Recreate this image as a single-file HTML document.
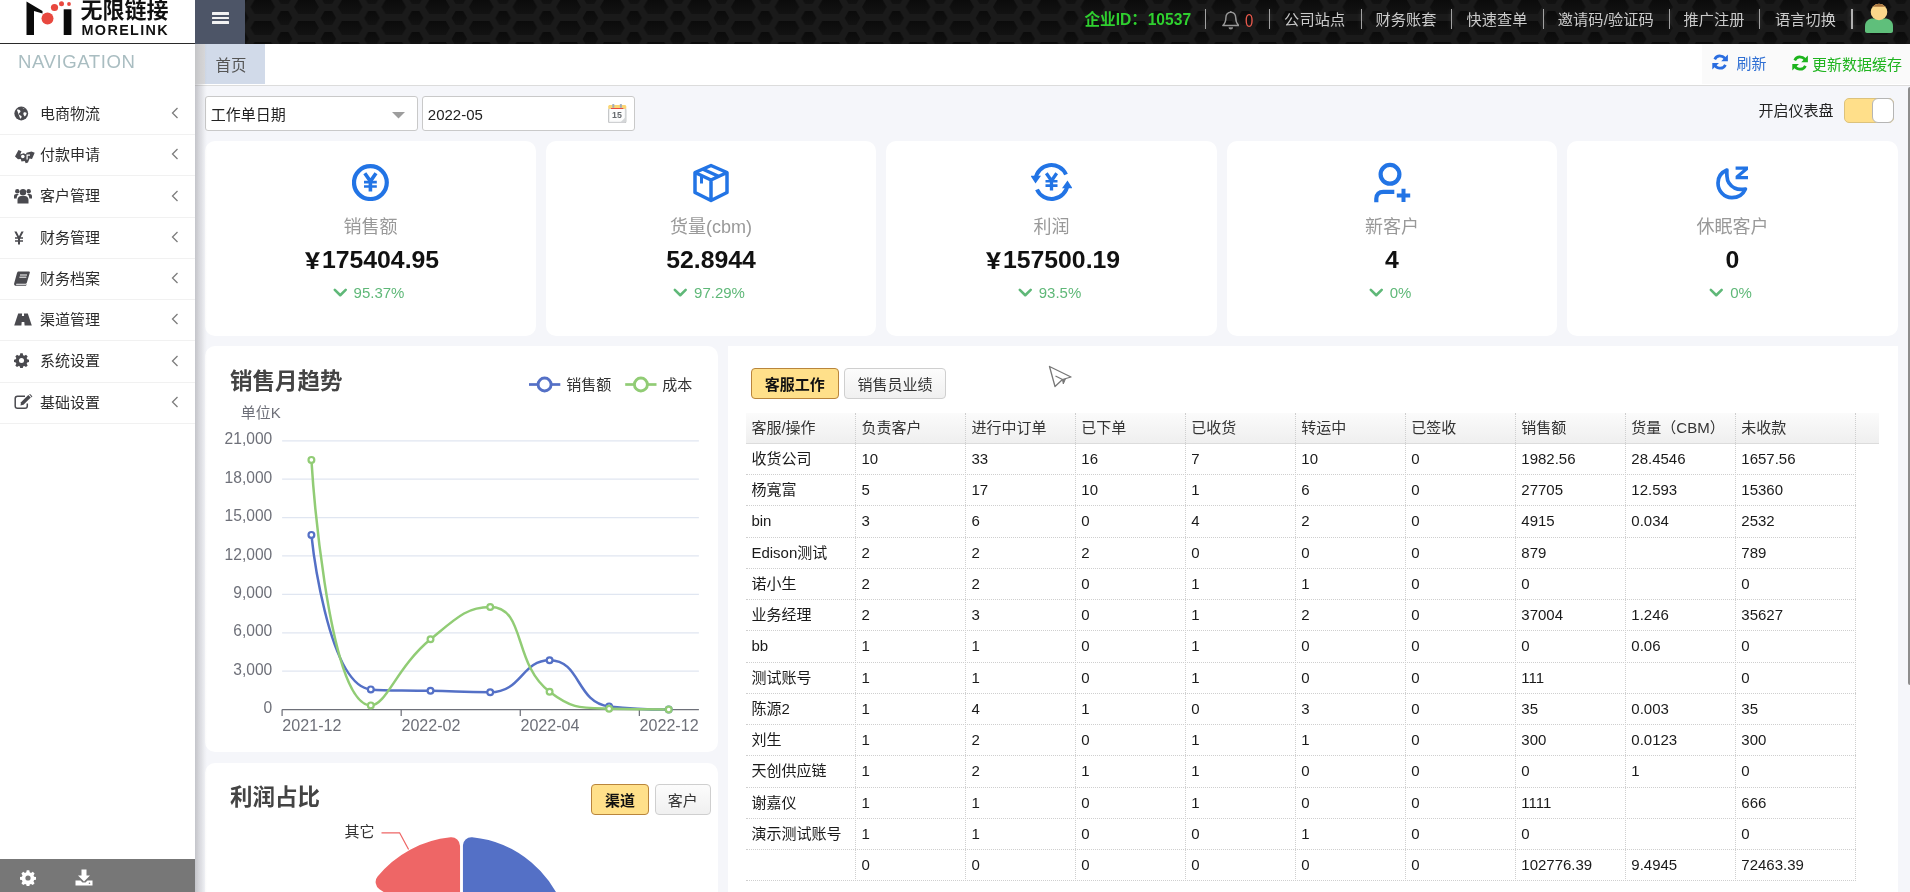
<!DOCTYPE html>
<html lang="zh-CN"><head><meta charset="utf-8"><title>MoreLink</title>
<style>
*{box-sizing:border-box;margin:0;padding:0}
html,body{width:1910px;height:892px;overflow:hidden;background:#f5f6fa;}
body{position:relative;font-family:"Liberation Sans","Noto Sans CJK SC",sans-serif;font-size:15px;color:#333;}
.abs{position:absolute}
#root{position:absolute;left:0;top:0;width:1910px;height:892px;will-change:transform}
#hdr{position:absolute;left:0;top:0;width:1910px;height:43.75px;background:#161616;overflow:hidden}
#hdr svg.hex{position:absolute;left:195px;top:0}
#logo{position:absolute;left:0;top:0;width:195px;height:43.75px;background:#fff;border-bottom:1.25px solid #2a2a2a}
#burger{position:absolute;left:195px;top:0;width:50px;height:43.75px;background:#4d5567}
#burger i{position:absolute;left:17px;width:17px;height:2.7px;background:#f2f2f2;border-radius:.5px}
.tm{position:absolute;top:0;height:43.75px;line-height:40.4px;color:#cacaca;font-size:15.2px;letter-spacing:.1px;white-space:nowrap}
.sep{position:absolute;top:9px;width:1.25px;height:20px;background:#a2a2a2;box-shadow:0 0 5px rgba(255,255,255,.22)}
#side{position:absolute;left:0;top:43.75px;width:195px;height:848.25px;background:#fff}
#side .nav{position:absolute;left:18px;top:8px;font-size:18.6px;color:#a9bdc1;letter-spacing:.55px;line-height:20px}
.mi{position:absolute;left:0;width:195px;height:41.25px;border-bottom:1.25px solid #f1f1f1;}
.mi span{position:absolute;left:40px;top:0;line-height:40px;font-size:15px;color:#2c2c2c}
.mi svg.ic{position:absolute;left:13px;top:12px;margin-top:-1px}
.mi svg.ch{position:absolute;left:171px;top:13.3px}
#sbot{position:absolute;left:0;top:858.75px;width:195px;height:34px;background:#777}
#shadow{position:absolute;left:195px;top:43.75px;width:12px;height:849px;background:linear-gradient(90deg,rgba(110,110,118,.36),rgba(110,110,118,.19) 45%,rgba(110,110,118,.05) 80%,rgba(110,110,118,0));z-index:5}
#tabs{position:absolute;left:195px;top:43.75px;width:1715px;height:42px;background:#fff;border-bottom:1.25px solid #dcdcdc}
#tab1{position:absolute;left:10px;top:0;width:60px;height:40px;background:#d1dae9;color:#555;font-size:15.4px;padding-left:10.5px;line-height:43.4px}
#tabr{position:absolute;left:1507px;top:0;width:208px;height:40px;background:#fafafa}
.card{position:absolute;background:#fff;border-radius:10px}
.sc{top:141px;width:331px;height:195px;text-align:center}
.sc .t{position:absolute;left:0;width:100%;top:72.8px;font-size:18px;color:#999;line-height:26px}
.sc .v{position:absolute;left:0;width:100%;top:101.7px;font-size:24.8px;font-weight:bold;color:#111;line-height:34px}
.sc .p{position:absolute;left:-2px;width:100%;top:142.2px;font-size:15px;color:#5fb878;line-height:20px}
.sc svg.ic{position:absolute;left:146px;top:22px;margin-top:-.5px}
.ttl{position:absolute;font-size:22.5px;font-weight:bold;color:#444;line-height:30px;white-space:nowrap}
.btn{position:absolute;height:30.5px;border:1.25px solid #cfcfcf;border-radius:4px;background:linear-gradient(#fcfcfc,#f0f0f0);font-size:15px;color:#333;text-align:center;line-height:32.4px;white-space:nowrap}
.btn.on{background:#ffe08a;border-color:#b9853c;color:#111;font-weight:bold}
.inp{position:absolute;top:96px;height:35px;background:#fff;border:1.25px solid #c9c9c9;border-radius:3px;font-size:15px;color:#222;line-height:35.4px;padding-left:4.8px}
.tc{position:absolute;height:31.25px;line-height:29.6px;font-size:15px;color:#1a1a1a;white-space:nowrap}
.yen{font-family:'Noto Sans CJK SC',sans-serif;font-size:21px;font-weight:900;position:relative;top:0px;display:inline-block;width:20px;line-height:20px;text-align:center;vertical-align:baseline}
</style></head>
<body>
<div id="root">
<div id="hdr"><svg class="hex" width="1715" height="44" viewBox="0 0 1715 44"><defs><linearGradient id="hg" x1="0" y1="0" x2="0" y2="1"><stop offset="0" stop-color="#0b0b0b"/><stop offset="1" stop-color="#121212"/></linearGradient><pattern id="hx" x="55.45" y="0" width="43.68" height="21.0" patternUnits="userSpaceOnUse"><rect width="44" height="21" fill="#1a1a1a"/><g fill="url(#hg)"><polygon points="0.0,6.9 4.1,-0.1 20.6,-0.1 24.7,6.9 20.6,13.9 20.6,13.9 4.1,13.9"/><polygon points="0.0,27.9 4.1,20.9 20.6,20.9 24.7,27.9 20.6,34.9 20.6,34.9 4.1,34.9"/><polygon points="26.3,18.0 30.4,11.0 37.9,11.0 42.0,18.0 37.9,25.0 37.9,25.0 30.4,25.0"/><polygon points="26.3,-3.0 30.4,-10.0 37.9,-10.0 42.0,-3.0 37.9,4.0 37.9,4.0 30.4,4.0"/><polygon points="26.3,39.0 30.4,32.0 37.9,32.0 42.0,39.0 37.9,46.0 37.9,46.0 30.4,46.0"/></g></pattern></defs><rect width="1715" height="44" fill="url(#hx)"/></svg><div id="logo"><svg class="abs" style="left:24px;top:0" width="50" height="38" viewBox="0 0 50 38"><path d="M2.5 35V1.5l16 9.5v2.5L10 11v24z" fill="#0a0a0a"/><rect x="39.7" y="9.3" width="7.7" height="25.7" fill="#0a0a0a"/><circle cx="23.5" cy="18.5" r="6" fill="#e8483f"/><circle cx="30.5" cy="7.5" r="3.6" fill="#e8483f"/><circle cx="37.5" cy="3.8" r="2.5" fill="#e8483f"/><circle cx="45" cy="4" r="1.9" fill="#e8483f"/></svg>
<div class="abs" style="left:80.5px;top:-5.2px;font-size:22px;line-height:26px;color:#111;font-weight:700;letter-spacing:0px;white-space:nowrap;font-family:'Noto Sans CJK SC',sans-serif">无限链接</div>
<div class="abs" style="left:81.5px;top:21.7px;font-size:14.4px;line-height:16px;color:#111;font-weight:bold;letter-spacing:1.36px;white-space:nowrap">MORELINK</div></div><div id="burger"><i style="top:12px"></i><i style="top:16.6px"></i><i style="top:21.3px"></i></div><div class="tm" style="left:1084.5px;color:#2fd02f;font-weight:bold;font-size:15.6px;letter-spacing:0">企业ID：<span style="margin-left:.8px;letter-spacing:0">10537</span></div><div class="sep" style="left:1205.0px"></div><div class="sep" style="left:1269.0px"></div><div class="sep" style="left:1360.5px"></div><div class="sep" style="left:1451.0px"></div><div class="sep" style="left:1542.5px"></div><div class="sep" style="left:1668.5px"></div><div class="sep" style="left:1759.0px"></div><div class="sep" style="left:1850.5px;width:2px;background:#b0b0b0"></div><svg class="abs" style="left:1221.800px;top:10.800px" width="17.600" height="19.600" viewBox="0 0 17.600 19.600"><path d="M8.800 1.300c-3.100 0-4.900 2.300-4.900 5.300 0 4-1.200 6.200-3 7.900h15.800c-1.800-1.700-3-3.900-3-7.900 0-3-1.800-5.300-4.900-5.300z" fill="none" stroke="#979797" stroke-width="1.450" stroke-linejoin="round"/><path d="M8.800 0v1.500" stroke="#979797" stroke-width="1.300"/><path d="M6.500 16.200a2.300 2.300 0 0 0 4.600 0z" fill="#8d8d8d"/></svg><div class="tm" style="left:1244.700px;color:#ea5a4d;font-size:18.600px;transform:scaleX(.8);transform-origin:0 50%;line-height:41.500px">0</div><div class="tm" style="left:1284.1px">公司站点</div><div class="tm" style="left:1375.4px">财务账套</div><div class="tm" style="left:1466.4px">快速查单</div><div class="tm" style="left:1557.8px">邀请码/验证码</div><div class="tm" style="left:1683.4px">推广注册</div><div class="tm" style="left:1775.0px">语言切换</div><svg class="abs" style="left:1864px;top:2px" width="30" height="32" viewBox="0 0 30 32"><path d="M1 29V24c0-5 4-7.500 8-7.500h12c4 0 8 2.500 8 7.500v5c0 1.100-.9 2-2 2H3c-1.100 0-2-.9-2-2z" fill="#5fbf7b"/><circle cx="15" cy="10" r="8.300" fill="#fbd78a"/><path d="M8.600 4.700a8.300 8.300 0 0 1 12.800 0z" fill="#a8743f"/></svg></div><div id="side"><div class="nav">NAVIGATION</div><div class="mi" style="top:50.15px"><svg class="ic" style="left:14px;top:13px" width="14.5" height="15" viewBox="0 0 16 16"><circle cx="8" cy="8" r="7.600" fill="#4a4a4f"/><path d="M3.200 3.800c1.500-.5 2.800 0 3.600.9.800.9.300 2-.6 2.500-.9.500-1 1.500-.3 2.300.7.800 1.900.6 2.400 1.600.4.900-.3 2.200-1.400 2.700M9.500 1.600c.3 1 1.400 1.300 2.200 1.200M10.500 7.200c1-.8 2.500-.6 3.500.2-.200 1.500-1 2.900-2.100 3.800-.9-.6-2.100-2.800-1.400-4z" fill="#fff" stroke="none"/></svg><span>电商物流</span><svg class="ch" width="8" height="12" viewBox="0 0 8 12"><path d="M6.500 1L1.500 6l5 5" fill="none" stroke="#7d7d7d" stroke-width="1.300"/></svg></div><div class="mi" style="top:91.40px"><svg class="ic" style="left:13.5px;top:12.5px" width="22" height="18" viewBox="0 0 22 18"><path d="M1 9.500l3.500-6.500 3 1.200-1.300 3.300 3.300-1.300 2.500 1 .5-1.500 5-1.200 3.200 1.300-2.700 6.200-2.500-.5-1.500 4-2.300.8-1-2.300-3.200.500-.8-2.500-2.700.2z" fill="#4a4a4f"/><circle cx="8.800" cy="9.500" r="1.800" fill="#fff"/><path d="M12.500 7.500h3.500v1.200h-2.300v3.800h-1.200z" fill="#fff"/></svg><span>付款申请</span><svg class="ch" width="8" height="12" viewBox="0 0 8 12"><path d="M6.500 1L1.500 6l5 5" fill="none" stroke="#7d7d7d" stroke-width="1.300"/></svg></div><div class="mi" style="top:132.65px"><svg class="ic" style="top:12.5px;left:14px" width="18" height="16" viewBox="0 0 18 16"><circle cx="9" cy="4.200" r="3.200" fill="#4a4a4f"/><circle cx="3.300" cy="3.300" r="2.200" fill="#4a4a4f"/><circle cx="14.700" cy="3.300" r="2.200" fill="#4a4a4f"/><path d="M3.500 15.500v-3.800c0-2.200 1.800-3.700 3.500-3.700h4c1.700 0 3.500 1.500 3.500 3.700v3.800z" fill="#4a4a4f"/><path d="M0 10.500V8.300C0 6.800 1 6 2.200 6H5c-1.400.8-2.300 2.200-2.300 4.500zM18 10.500V8.300C18 6.800 17 6 15.800 6H13c1.400.8 2.300 2.200 2.300 4.500z" fill="#4a4a4f"/></svg><span>客户管理</span><svg class="ch" width="8" height="12" viewBox="0 0 8 12"><path d="M6.500 1L1.500 6l5 5" fill="none" stroke="#7d7d7d" stroke-width="1.300"/></svg></div><div class="mi" style="top:173.90px"><svg class="ic" style="top:14px;left:14px" width="10" height="14" viewBox="0 0 10 14"><path d="M.3.500h2.300L5 5.300 7.400.5h2.300L6.600 6.300h2.400v1.500H6v1.400h3v1.500H6V13.500H4V10.700H1V9.200h3V7.800H1V6.300h2.400z" fill="#4a4a4f"/></svg><span>财务管理</span><svg class="ch" width="8" height="12" viewBox="0 0 8 12"><path d="M6.500 1L1.500 6l5 5" fill="none" stroke="#7d7d7d" stroke-width="1.300"/></svg></div><div class="mi" style="top:215.15px"><svg class="ic" style="top:13px;left:14px" width="16" height="15" viewBox="0 0 16 15"><path d="M4.500.5h10.500c.7 0 1 .5.800 1.200l-3 10c-.2.700-.8 1.100-1.500 1.100H2.500c-.6 0-.7.900 0 .9h9.300l.8-.6-.3 1.100c-.1.400-.5.600-.9.600H2c-1.500 0-2.200-1.200-1.800-2.500L3 2C3.200 1.100 3.800.5 4.500.5z" fill="#4a4a4f"/><path d="M6 4h7M5.400 6.200h7" stroke="#fff" stroke-width="1"/></svg><span>财务档案</span><svg class="ch" width="8" height="12" viewBox="0 0 8 12"><path d="M6.500 1L1.500 6l5 5" fill="none" stroke="#7d7d7d" stroke-width="1.300"/></svg></div><div class="mi" style="top:256.40px"><svg class="ic" style="top:13.5px;left:14px" width="18" height="13" viewBox="0 0 18 13"><path d="M4.200.5h3.900l-.2 2.600h2.200l-.2-2.600h3.900L17.800 12.500h-7.200l-.3-3.600H7.700l-.3 3.600H.2z" fill="#4a4a4f"/><path d="M8.300 4.300h1.400l.2 3.200H8.100z" fill="#4a4a4f"/></svg><span>渠道管理</span><svg class="ch" width="8" height="12" viewBox="0 0 8 12"><path d="M6.500 1L1.500 6l5 5" fill="none" stroke="#7d7d7d" stroke-width="1.300"/></svg></div><div class="mi" style="top:297.65px"><svg class="ic" style="top:13px;left:14px" width="15" height="15" viewBox="0 0 16 16"><path d="M6.700.3h2.600l.4 2 1.300.6 1.800-1.100 1.800 1.800-1.100 1.800.6 1.300 2 .4v2.600l-2 .4-.6 1.300 1.100 1.800-1.800 1.800-1.800-1.100-1.300.6-.4 2H6.700l-.4-2L5 13.900l-1.800 1.100-1.800-1.800 1.100-1.800-.6-1.300-2-.4V7.100l2-.4.6-1.300L1.400 3.600l1.800-1.800L5 2.900l1.300-.6z" fill="#4a4a4f"/><circle cx="8" cy="8" r="2.700" fill="#fff"/></svg><span>系统设置</span><svg class="ch" width="8" height="12" viewBox="0 0 8 12"><path d="M6.500 1L1.500 6l5 5" fill="none" stroke="#7d7d7d" stroke-width="1.300"/></svg></div><div class="mi" style="top:338.90px"><svg class="ic" style="top:12.5px;left:14px" width="19" height="16" viewBox="0 0 19 16"><path d="M11 2.200H3.500c-1.300 0-2.300 1-2.300 2.300v7.500c0 1.300 1 2.300 2.300 2.300H11c1.300 0 2.300-1 2.300-2.300V9.500" fill="none" stroke="#4a4a4f" stroke-width="1.500"/><path d="M7 8.300L14.300 1l2.500 2.500-7.300 7.300-3 .6z" fill="#4a4a4f"/><path d="M15.200.3l.9-.2 2.200 2.200-.5 1.200z" fill="#4a4a4f"/></svg><span>基础设置</span><svg class="ch" width="8" height="12" viewBox="0 0 8 12"><path d="M6.500 1L1.500 6l5 5" fill="none" stroke="#7d7d7d" stroke-width="1.300"/></svg></div></div><div id="sbot"><svg class="abs" style="left:19.500px;top:11.500px" width="16" height="16" viewBox="0 0 16 16"><path d="M6.700.3h2.600l.4 2 1.300.6 1.800-1.100 1.800 1.800-1.100 1.800.6 1.300 2 .4v2.600l-2 .4-.6 1.300 1.100 1.800-1.800 1.800-1.800-1.100-1.300.6-.4 2H6.700l-.4-2L5 13.900l-1.800 1.100-1.800-1.800 1.100-1.800-.6-1.300-2-.4V7.100l2-.4.6-1.300L1.400 3.600l1.800-1.800L5 2.900l1.300-.6z" fill="#fff"/><circle cx="8" cy="8" r="2.600" fill="#777"/></svg><svg class="abs" style="left:74.500px;top:10.500px" width="18" height="17" viewBox="0 0 18 17"><path d="M6.500.5h5v6h3.500L9 12.500 3 6.500h3.500z" fill="#fff"/><path d="M.5 11.500h5l2 2h3l2-2h5v5H.5z" fill="#fff"/><circle cx="14.500" cy="14.300" r=".8" fill="#777"/></svg></div><div id="tabs"><div id="tabr"></div><div id="tab1">首页</div><svg class="abs" style="left:1516.9px;top:10.5px" width="16.2" height="16.2" viewBox="0 0 16 16"><path d="M13.600 6.500A5.800 5.800 0 0 0 2.700 5.300M2.400 9.500a5.800 5.800 0 0 0 10.900 1.200" fill="none" stroke="#2a6de0" stroke-width="2.700"/><path d="M15.700.6v6.600H9.100zM.3 15.400V8.800h6.600z" fill="#2a6de0"/></svg><div class="abs" style="left:1541.500px;top:0;line-height:39px;font-size:15px;color:#2f6fd3;white-space:nowrap">刷新</div><svg class="abs" style="left:1596.7px;top:11.4px" width="16.2" height="16.2" viewBox="0 0 16 16"><path d="M13.600 6.500A5.800 5.800 0 0 0 2.700 5.300M2.400 9.500a5.800 5.800 0 0 0 10.900 1.200" fill="none" stroke="#1db41d" stroke-width="2.700"/><path d="M15.700.6v6.600H9.100zM.3 15.400V8.800h6.600z" fill="#1db41d"/></svg><div class="abs" style="left:1617px;top:0;line-height:41px;font-size:15px;color:#1fb41f;white-space:nowrap">更新数据缓存</div></div><div class="inp" style="left:205px;width:213px">工作单日期<svg class="abs" style="left:185.7px;top:14.5px" width="13" height="7" viewBox="0 0 13 7"><path d="M0 0h13L6.500 6.500z" fill="#9d9d9d"/></svg></div><div class="inp" style="left:422px;width:213px">2022-05<svg class="abs" style="left:185.200px;top:6.600px" width="18.500" height="19.500" viewBox="0 0 18.500 19.500"><rect x=".6" y="4.500" width="17.300" height="14.300" rx="1.200" fill="#f1f2f3" stroke="#c3c5c7" stroke-width="1.100"/><rect x="1.800" y="5.200" width="14.600" height="11.600" fill="#fdfdfd"/><path d="M.2 4.800V2.600c0-.9.700-1.600 1.600-1.600h14.900c.9 0 1.600.7 1.600 1.600v2.200z" fill="#fbd674"/><rect x="3" y="4" width="12.300" height="1" fill="#e8493f"/><rect x="4.300" y="0" width="2" height="3.800" rx=".6" fill="#a3adb6"/><rect x="11.900" y="0" width="2" height="3.800" rx=".6" fill="#a3adb6"/><text x="9" y="14.400" font-size="8.800" font-family="Liberation Sans,sans-serif" text-anchor="middle" fill="#666a6e" font-weight="bold">15</text><path d="M12.500 18.200h5v-5z" fill="#d5d7d9"/></svg></div><div class="abs" style="left:1758.500px;top:99px;font-size:15px;color:#222;line-height:24px;white-space:nowrap">开启仪表盘</div><div class="abs" style="left:1844px;top:97.800px;width:50px;height:25px;border-radius:5px;background:#ffdf8a;border:1px solid #dcc27c;"></div><div class="abs" style="left:1872px;top:97.800px;width:22px;height:25px;border-radius:6px;background:#fff;border:1.200px solid #b5b5b5"></div><div class="card sc" style="left:205px;width:331px"><svg class="ic" width="38" height="38" viewBox="0 0 38 38" style="left:147px"><circle cx="18.400" cy="19.600" r="16.400" fill="none" stroke="#2274e5" stroke-width="4.200"/><path d="M12.800 10.200L18.400 18.300l5.600-8.100M18.400 18V28.600" fill="none" stroke="#2274e5" stroke-width="3.600" stroke-linejoin="miter"/><path d="M12 19.200h12.800M12 23.500h12.800" fill="none" stroke="#2274e5" stroke-width="2.700"/></svg><div class="t">销售额</div><div class="v"><span class="yen">￥</span>175404.95</div><div class="p"><svg width="14.500" height="10" viewBox="0 0 16 11" style="vertical-align:0.500px;margin-right:6.500px"><path d="M2 2l6 6 6-6" fill="none" stroke="#5fb878" stroke-width="2.800" stroke-linecap="round" stroke-linejoin="round"/></svg>95.37%</div></div><div class="card sc" style="left:546px;width:330px"><svg class="ic" width="38" height="40" viewBox="0 0 38 40" style="top:22.500px;left:145.500px"><path d="M19 2.500L35 9.500V29.500L19 37.500 3 29.500V9.500zM3 9.500L19 17 35 9.500M19 17V37.500M10.500 6L27 13.500" fill="none" stroke="#2274e5" stroke-width="3.500" stroke-linejoin="round"/><path d="M9.500 12.500v8" stroke="#2274e5" stroke-width="3" /></svg><div class="t">货量(cbm)</div><div class="v">52.8944</div><div class="p"><svg width="14.500" height="10" viewBox="0 0 16 11" style="vertical-align:0.500px;margin-right:6.500px"><path d="M2 2l6 6 6-6" fill="none" stroke="#5fb878" stroke-width="2.800" stroke-linecap="round" stroke-linejoin="round"/></svg>97.29%</div></div><div class="card sc" style="left:886px;width:331px"><svg class="ic" width="41" height="40" viewBox="0 0 41 40" style="left:144.800px;top:21.800px"><path d="M4.500 17A16 16 0 0 1 35 12.500M36.500 23A16 16 0 0 1 6 27.500" fill="none" stroke="#2274e5" stroke-width="4"/><path d="M-.5 13.800h10.500l-5.500 7.700zM41.500 26.200h-10.500l5.500-7.700z" fill="#2274e5"/><path d="M15.300 11.200L20.500 18.800l5.200-7.600M20.500 18.500v10" fill="none" stroke="#2274e5" stroke-width="3.300"/><path d="M14.500 19.300h12M14.500 23.600h12" fill="none" stroke="#2274e5" stroke-width="2.600"/></svg><div class="t">利润</div><div class="v"><span class="yen">￥</span>157500.19</div><div class="p"><svg width="14.500" height="10" viewBox="0 0 16 11" style="vertical-align:0.500px;margin-right:6.500px"><path d="M2 2l6 6 6-6" fill="none" stroke="#5fb878" stroke-width="2.800" stroke-linecap="round" stroke-linejoin="round"/></svg>93.5%</div></div><div class="card sc" style="left:1227px;width:330px"><svg class="ic" width="38" height="42" viewBox="0 0 38 42" style="top:20px;left:146px"><circle cx="17" cy="13.300" r="9.400" fill="none" stroke="#2274e5" stroke-width="4.200"/><path d="M3.300 41.300v-3.500c0-4.500 3-7 7-7h11" fill="none" stroke="#2274e5" stroke-width="4.200"/><path d="M30.500 27.800v13.200M23.800 34.400h13.400" stroke="#2274e5" stroke-width="4"/></svg><div class="t">新客户</div><div class="v">4</div><div class="p"><svg width="14.500" height="10" viewBox="0 0 16 11" style="vertical-align:0.500px;margin-right:6.500px"><path d="M2 2l6 6 6-6" fill="none" stroke="#5fb878" stroke-width="2.800" stroke-linecap="round" stroke-linejoin="round"/></svg>0%</div></div><div class="card sc" style="left:1567px;width:331px"><svg class="ic" width="38" height="38" viewBox="0 0 38 38" style="top:24px;left:146px"><path d="M13.900 5C8 7.500 5 12.500 5 18 5 26 11 32.700 18.900 32.700 25 32.700 30 29.500 32.400 24 28 24.800 24.500 24.500 21.500 23 17 20.500 14.200 16 14 11.500 13.800 9 13.700 7 13.900 5z" fill="none" stroke="#2274e5" stroke-width="3.700" stroke-linejoin="round"/><path d="M22.600 1.400h12.400v3.300L27.600 11h7.400v3.300H22.600V11L30 4.700h-7.400z" fill="#2274e5"/></svg><div class="t">休眠客户</div><div class="v">0</div><div class="p"><svg width="14.500" height="10" viewBox="0 0 16 11" style="vertical-align:0.500px;margin-right:6.500px"><path d="M2 2l6 6 6-6" fill="none" stroke="#5fb878" stroke-width="2.800" stroke-linecap="round" stroke-linejoin="round"/></svg>0%</div></div><div class="card" style="left:205.0px;top:346.0px;width:513.0px;height:406.0px"><div class="ttl" style="left:25px;top:20.700px">销售月趋势</div><svg class="abs" style="left:0;top:0" width="513" height="406" viewBox="0 0 513 406" font-family="Liberation Sans,Noto Sans CJK SC,sans-serif"><path d="M77.1 94.80H493.9" stroke="#e0e6f1" stroke-width="1.250"/><text x="67.3" y="98.4" font-size="15.600" fill="#6e7079" text-anchor="end">21,000</text><path d="M77.1 133.19H493.9" stroke="#e0e6f1" stroke-width="1.250"/><text x="67.3" y="136.8" font-size="15.600" fill="#6e7079" text-anchor="end">18,000</text><path d="M77.1 171.58H493.9" stroke="#e0e6f1" stroke-width="1.250"/><text x="67.3" y="175.2" font-size="15.600" fill="#6e7079" text-anchor="end">15,000</text><path d="M77.1 209.97H493.9" stroke="#e0e6f1" stroke-width="1.250"/><text x="67.3" y="213.6" font-size="15.600" fill="#6e7079" text-anchor="end">12,000</text><path d="M77.1 248.36H493.9" stroke="#e0e6f1" stroke-width="1.250"/><text x="67.3" y="252.0" font-size="15.600" fill="#6e7079" text-anchor="end">9,000</text><path d="M77.1 286.75H493.9" stroke="#e0e6f1" stroke-width="1.250"/><text x="67.3" y="290.4" font-size="15.600" fill="#6e7079" text-anchor="end">6,000</text><path d="M77.1 325.14H493.9" stroke="#e0e6f1" stroke-width="1.250"/><text x="67.3" y="328.7" font-size="15.600" fill="#6e7079" text-anchor="end">3,000</text><text x="67.3" y="367.1" font-size="15.600" fill="#6e7079" text-anchor="end">0</text><text x="35.8" y="72.4" font-size="15" fill="#6e7079">单位K</text><path d="M77.1 363.60H493.9" stroke="#6e7079" stroke-width="1.250"/><path d="M77.10 363.60v6.500" stroke="#6e7079" stroke-width="1.250"/><path d="M196.19 363.60v6.500" stroke="#6e7079" stroke-width="1.250"/><path d="M315.27 363.60v6.500" stroke="#6e7079" stroke-width="1.250"/><path d="M434.36 363.60v6.500" stroke="#6e7079" stroke-width="1.250"/><text x="106.9" y="385.0" font-size="16.100" fill="#6e7079" text-anchor="middle">2021-12</text><text x="226.0" y="385.0" font-size="16.100" fill="#6e7079" text-anchor="middle">2022-02</text><text x="345.0" y="385.0" font-size="16.100" fill="#6e7079" text-anchor="middle">2022-04</text><text x="464.1" y="385.0" font-size="16.100" fill="#6e7079" text-anchor="middle">2022-12</text><path d="M106.40 188.90C106.40 188.90 122.04 339.52 165.80 343.40C181.59 344.80 195.65 344.08 225.50 344.80C255.35 345.53 257.25 346.30 285.20 346.30C316.80 346.30 316.50 314.20 344.60 314.20C375.95 314.20 370.87 356.49 404.10 360.40C430.42 363.50 463.70 363.50 463.70 363.50" fill="none" stroke="#5470c6" stroke-width="2.500" stroke-linejoin="bevel"/><path d="M106.40 113.90C106.40 113.90 121.77 359.40 165.80 359.40C181.32 359.40 191.62 321.22 225.50 293.30C251.32 272.02 261.62 261.00 285.20 261.00C321.17 261.00 307.38 317.51 344.60 345.80C366.83 362.70 373.77 361.87 404.10 362.70C433.32 363.50 463.70 363.50 463.70 363.50" fill="none" stroke="#91cc75" stroke-width="2.500" stroke-linejoin="bevel"/><circle cx="106.4" cy="188.9" r="2.900" fill="#fff" stroke="#5470c6" stroke-width="2.200"/><circle cx="165.8" cy="343.4" r="2.900" fill="#fff" stroke="#5470c6" stroke-width="2.200"/><circle cx="225.5" cy="344.8" r="2.900" fill="#fff" stroke="#5470c6" stroke-width="2.200"/><circle cx="285.2" cy="346.3" r="2.900" fill="#fff" stroke="#5470c6" stroke-width="2.200"/><circle cx="344.6" cy="314.2" r="2.900" fill="#fff" stroke="#5470c6" stroke-width="2.200"/><circle cx="404.1" cy="360.4" r="2.900" fill="#fff" stroke="#5470c6" stroke-width="2.200"/><circle cx="463.7" cy="363.5" r="2.900" fill="#fff" stroke="#5470c6" stroke-width="2.200"/><circle cx="106.4" cy="113.9" r="2.900" fill="#fff" stroke="#91cc75" stroke-width="2.200"/><circle cx="165.8" cy="359.4" r="2.900" fill="#fff" stroke="#91cc75" stroke-width="2.200"/><circle cx="225.5" cy="293.3" r="2.900" fill="#fff" stroke="#91cc75" stroke-width="2.200"/><circle cx="285.2" cy="261.0" r="2.900" fill="#fff" stroke="#91cc75" stroke-width="2.200"/><circle cx="344.6" cy="345.8" r="2.900" fill="#fff" stroke="#91cc75" stroke-width="2.200"/><circle cx="404.1" cy="362.7" r="2.900" fill="#fff" stroke="#91cc75" stroke-width="2.200"/><circle cx="463.7" cy="363.5" r="2.900" fill="#fff" stroke="#91cc75" stroke-width="2.200"/><path d="M324.0 38.5h31.300" stroke="#5470c6" stroke-width="2.700"/><circle cx="339.6" cy="38.5" r="6.500" fill="#fff" stroke="#5470c6" stroke-width="2.900"/><text x="361.3" y="43.8" font-size="15" fill="#333">销售额</text><path d="M420.2 38.5h31.300" stroke="#91cc75" stroke-width="2.700"/><circle cx="435.9" cy="38.5" r="6.500" fill="#fff" stroke="#91cc75" stroke-width="2.900"/><text x="457.2" y="43.8" font-size="15" fill="#333">成本</text></svg></div><div class="card" style="left:205.0px;top:763.0px;width:513.0px;height:140.0px;border-radius:10px 10px 0 0;overflow:hidden"><div class="ttl" style="left:25px;top:19.800px">利润占比</div><div class="btn on" style="left:386px;top:21px;width:58px">渠道</div><div class="btn" style="left:449.500px;top:21px;width:56.500px">客户</div><svg class="abs" style="left:0;top:0" width="513" height="140" viewBox="0 0 513 140" font-family="Liberation Sans,Noto Sans CJK SC,sans-serif"><path d="M256.40 182.00L256.40 82.90A10.0 10.0 0 0 1 267.40 72.95A109.6 109.6 0 0 1 320.45 270.93A10.0 10.0 0 0 1 305.95 267.82Z" fill="#5470c6" stroke="#fff" stroke-width="2.700" stroke-linejoin="round"/><path d="M256.40 182.00L173.76 127.30A10.0 10.0 0 0 1 171.54 112.64A109.6 109.6 0 0 1 245.40 72.95A10.0 10.0 0 0 1 256.40 82.90Z" fill="#ee6666" stroke="#fff" stroke-width="2.700" stroke-linejoin="round"/><path d="M176.5 69.8H194.6L203.6 86.5" fill="none" stroke="#ee6666" stroke-width="1.250"/><text x="139.6" y="73.7" font-size="15" fill="#333">其它</text></svg></div><div class="card" style="left:728.0px;top:346.0px;width:1170.0px;height:560.0px;border-radius:0;overflow:hidden"><div class="btn on" style="left:22.800px;top:22.300px;width:88px">客服工作</div><div class="btn" style="left:116px;top:22.300px;width:101.800px">销售员业绩</div><svg class="abs" style="left:319px;top:18px" width="26" height="24" viewBox="0 0 26 24"><path d="M2.500 2.500L24 13 15.500 15.500 8 22.500zM15.500 15.500L8.500 12" fill="#fff" stroke="#777" stroke-width="1.300" stroke-linejoin="round"/><path d="M15.500 15.500l.8 4.500 2.200-5.300" fill="#777" stroke="#777" stroke-width="1"/></svg><div class="abs" style="left:17.8px;top:67.0px;width:1133.5px;height:30.800px;background:linear-gradient(#fbfbfb,#efefef);border-bottom:1.250px solid #dcdcdc"></div><div class="abs" style="left:127.2px;top:67.0px;width:0;height:467.6px;border-left:1.250px dotted #cfcfcf"></div><div class="abs" style="left:237.2px;top:67.0px;width:0;height:467.6px;border-left:1.250px dotted #cfcfcf"></div><div class="abs" style="left:347.1px;top:67.0px;width:0;height:467.6px;border-left:1.250px dotted #cfcfcf"></div><div class="abs" style="left:457.1px;top:67.0px;width:0;height:467.6px;border-left:1.250px dotted #cfcfcf"></div><div class="abs" style="left:567.1px;top:67.0px;width:0;height:467.6px;border-left:1.250px dotted #cfcfcf"></div><div class="abs" style="left:677.1px;top:67.0px;width:0;height:467.6px;border-left:1.250px dotted #cfcfcf"></div><div class="abs" style="left:787.1px;top:67.0px;width:0;height:467.6px;border-left:1.250px dotted #cfcfcf"></div><div class="abs" style="left:897.1px;top:67.0px;width:0;height:467.6px;border-left:1.250px dotted #cfcfcf"></div><div class="abs" style="left:1007.1px;top:67.0px;width:0;height:467.6px;border-left:1.250px dotted #cfcfcf"></div><div class="abs" style="left:1127.1px;top:67.0px;width:0;height:467.6px;border-left:1.250px dotted #cfcfcf"></div><div class="abs" style="left:17.8px;top:128.10px;width:1109.9px;height:0;border-top:1.250px dotted #cfcfcf"></div><div class="abs" style="left:17.8px;top:159.35px;width:1109.9px;height:0;border-top:1.250px dotted #cfcfcf"></div><div class="abs" style="left:17.8px;top:190.60px;width:1109.9px;height:0;border-top:1.250px dotted #cfcfcf"></div><div class="abs" style="left:17.8px;top:221.85px;width:1109.9px;height:0;border-top:1.250px dotted #cfcfcf"></div><div class="abs" style="left:17.8px;top:253.10px;width:1109.9px;height:0;border-top:1.250px dotted #cfcfcf"></div><div class="abs" style="left:17.8px;top:284.35px;width:1109.9px;height:0;border-top:1.250px dotted #cfcfcf"></div><div class="abs" style="left:17.8px;top:315.60px;width:1109.9px;height:0;border-top:1.250px dotted #cfcfcf"></div><div class="abs" style="left:17.8px;top:346.85px;width:1109.9px;height:0;border-top:1.250px dotted #cfcfcf"></div><div class="abs" style="left:17.8px;top:378.10px;width:1109.9px;height:0;border-top:1.250px dotted #cfcfcf"></div><div class="abs" style="left:17.8px;top:409.35px;width:1109.9px;height:0;border-top:1.250px dotted #cfcfcf"></div><div class="abs" style="left:17.8px;top:440.60px;width:1109.9px;height:0;border-top:1.250px dotted #cfcfcf"></div><div class="abs" style="left:17.8px;top:471.85px;width:1109.9px;height:0;border-top:1.250px dotted #cfcfcf"></div><div class="abs" style="left:17.8px;top:503.10px;width:1109.9px;height:0;border-top:1.250px dotted #cfcfcf"></div><div class="abs" style="left:17.8px;top:534.35px;width:1109.9px;height:0;border-top:1.250px dotted #cfcfcf"></div><div class="abs" style="left:17.8px;top:565.60px;width:1109.9px;height:0;border-top:1.250px dotted #cfcfcf"></div><div class="tc" style="left:23.4px;top:67.1px;color:#333">客服/操作</div><div class="tc" style="left:133.4px;top:67.1px;color:#333">负责客户</div><div class="tc" style="left:243.4px;top:67.1px;color:#333">进行中订单</div><div class="tc" style="left:353.3px;top:67.1px;color:#333">已下单</div><div class="tc" style="left:463.3px;top:67.1px;color:#333">已收货</div><div class="tc" style="left:573.3px;top:67.1px;color:#333">转运中</div><div class="tc" style="left:683.3px;top:67.1px;color:#333">已签收</div><div class="tc" style="left:793.3px;top:67.1px;color:#333">销售额</div><div class="tc" style="left:903.3px;top:67.1px;color:#333">货量（CBM）</div><div class="tc" style="left:1013.3px;top:67.1px;color:#333">未收款</div><div class="tc" style="left:23.4px;top:97.75px">收货公司</div><div class="tc" style="left:133.4px;top:97.75px">10</div><div class="tc" style="left:243.4px;top:97.75px">33</div><div class="tc" style="left:353.3px;top:97.75px">16</div><div class="tc" style="left:463.3px;top:97.75px">7</div><div class="tc" style="left:573.3px;top:97.75px">10</div><div class="tc" style="left:683.3px;top:97.75px">0</div><div class="tc" style="left:793.3px;top:97.75px">1982.56</div><div class="tc" style="left:903.3px;top:97.75px">28.4546</div><div class="tc" style="left:1013.3px;top:97.75px">1657.56</div><div class="tc" style="left:23.4px;top:129.00px">杨寬富</div><div class="tc" style="left:133.4px;top:129.00px">5</div><div class="tc" style="left:243.4px;top:129.00px">17</div><div class="tc" style="left:353.3px;top:129.00px">10</div><div class="tc" style="left:463.3px;top:129.00px">1</div><div class="tc" style="left:573.3px;top:129.00px">6</div><div class="tc" style="left:683.3px;top:129.00px">0</div><div class="tc" style="left:793.3px;top:129.00px">27705</div><div class="tc" style="left:903.3px;top:129.00px">12.593</div><div class="tc" style="left:1013.3px;top:129.00px">15360</div><div class="tc" style="left:23.4px;top:160.25px">bin</div><div class="tc" style="left:133.4px;top:160.25px">3</div><div class="tc" style="left:243.4px;top:160.25px">6</div><div class="tc" style="left:353.3px;top:160.25px">0</div><div class="tc" style="left:463.3px;top:160.25px">4</div><div class="tc" style="left:573.3px;top:160.25px">2</div><div class="tc" style="left:683.3px;top:160.25px">0</div><div class="tc" style="left:793.3px;top:160.25px">4915</div><div class="tc" style="left:903.3px;top:160.25px">0.034</div><div class="tc" style="left:1013.3px;top:160.25px">2532</div><div class="tc" style="left:23.4px;top:191.50px">Edison测试</div><div class="tc" style="left:133.4px;top:191.50px">2</div><div class="tc" style="left:243.4px;top:191.50px">2</div><div class="tc" style="left:353.3px;top:191.50px">2</div><div class="tc" style="left:463.3px;top:191.50px">0</div><div class="tc" style="left:573.3px;top:191.50px">0</div><div class="tc" style="left:683.3px;top:191.50px">0</div><div class="tc" style="left:793.3px;top:191.50px">879</div><div class="tc" style="left:1013.3px;top:191.50px">789</div><div class="tc" style="left:23.4px;top:222.75px">诺小生</div><div class="tc" style="left:133.4px;top:222.75px">2</div><div class="tc" style="left:243.4px;top:222.75px">2</div><div class="tc" style="left:353.3px;top:222.75px">0</div><div class="tc" style="left:463.3px;top:222.75px">1</div><div class="tc" style="left:573.3px;top:222.75px">1</div><div class="tc" style="left:683.3px;top:222.75px">0</div><div class="tc" style="left:793.3px;top:222.75px">0</div><div class="tc" style="left:1013.3px;top:222.75px">0</div><div class="tc" style="left:23.4px;top:254.00px">业务经理</div><div class="tc" style="left:133.4px;top:254.00px">2</div><div class="tc" style="left:243.4px;top:254.00px">3</div><div class="tc" style="left:353.3px;top:254.00px">0</div><div class="tc" style="left:463.3px;top:254.00px">1</div><div class="tc" style="left:573.3px;top:254.00px">2</div><div class="tc" style="left:683.3px;top:254.00px">0</div><div class="tc" style="left:793.3px;top:254.00px">37004</div><div class="tc" style="left:903.3px;top:254.00px">1.246</div><div class="tc" style="left:1013.3px;top:254.00px">35627</div><div class="tc" style="left:23.4px;top:285.25px">bb</div><div class="tc" style="left:133.4px;top:285.25px">1</div><div class="tc" style="left:243.4px;top:285.25px">1</div><div class="tc" style="left:353.3px;top:285.25px">0</div><div class="tc" style="left:463.3px;top:285.25px">1</div><div class="tc" style="left:573.3px;top:285.25px">0</div><div class="tc" style="left:683.3px;top:285.25px">0</div><div class="tc" style="left:793.3px;top:285.25px">0</div><div class="tc" style="left:903.3px;top:285.25px">0.06</div><div class="tc" style="left:1013.3px;top:285.25px">0</div><div class="tc" style="left:23.4px;top:316.50px">测试账号</div><div class="tc" style="left:133.4px;top:316.50px">1</div><div class="tc" style="left:243.4px;top:316.50px">1</div><div class="tc" style="left:353.3px;top:316.50px">0</div><div class="tc" style="left:463.3px;top:316.50px">1</div><div class="tc" style="left:573.3px;top:316.50px">0</div><div class="tc" style="left:683.3px;top:316.50px">0</div><div class="tc" style="left:793.3px;top:316.50px">111</div><div class="tc" style="left:1013.3px;top:316.50px">0</div><div class="tc" style="left:23.4px;top:347.75px">陈源2</div><div class="tc" style="left:133.4px;top:347.75px">1</div><div class="tc" style="left:243.4px;top:347.75px">4</div><div class="tc" style="left:353.3px;top:347.75px">1</div><div class="tc" style="left:463.3px;top:347.75px">0</div><div class="tc" style="left:573.3px;top:347.75px">3</div><div class="tc" style="left:683.3px;top:347.75px">0</div><div class="tc" style="left:793.3px;top:347.75px">35</div><div class="tc" style="left:903.3px;top:347.75px">0.003</div><div class="tc" style="left:1013.3px;top:347.75px">35</div><div class="tc" style="left:23.4px;top:379.00px">刘生</div><div class="tc" style="left:133.4px;top:379.00px">1</div><div class="tc" style="left:243.4px;top:379.00px">2</div><div class="tc" style="left:353.3px;top:379.00px">0</div><div class="tc" style="left:463.3px;top:379.00px">1</div><div class="tc" style="left:573.3px;top:379.00px">1</div><div class="tc" style="left:683.3px;top:379.00px">0</div><div class="tc" style="left:793.3px;top:379.00px">300</div><div class="tc" style="left:903.3px;top:379.00px">0.0123</div><div class="tc" style="left:1013.3px;top:379.00px">300</div><div class="tc" style="left:23.4px;top:410.25px">天创供应链</div><div class="tc" style="left:133.4px;top:410.25px">1</div><div class="tc" style="left:243.4px;top:410.25px">2</div><div class="tc" style="left:353.3px;top:410.25px">1</div><div class="tc" style="left:463.3px;top:410.25px">1</div><div class="tc" style="left:573.3px;top:410.25px">0</div><div class="tc" style="left:683.3px;top:410.25px">0</div><div class="tc" style="left:793.3px;top:410.25px">0</div><div class="tc" style="left:903.3px;top:410.25px">1</div><div class="tc" style="left:1013.3px;top:410.25px">0</div><div class="tc" style="left:23.4px;top:441.50px">谢嘉仪</div><div class="tc" style="left:133.4px;top:441.50px">1</div><div class="tc" style="left:243.4px;top:441.50px">1</div><div class="tc" style="left:353.3px;top:441.50px">0</div><div class="tc" style="left:463.3px;top:441.50px">1</div><div class="tc" style="left:573.3px;top:441.50px">0</div><div class="tc" style="left:683.3px;top:441.50px">0</div><div class="tc" style="left:793.3px;top:441.50px">1111</div><div class="tc" style="left:1013.3px;top:441.50px">666</div><div class="tc" style="left:23.4px;top:472.75px">演示测试账号</div><div class="tc" style="left:133.4px;top:472.75px">1</div><div class="tc" style="left:243.4px;top:472.75px">1</div><div class="tc" style="left:353.3px;top:472.75px">0</div><div class="tc" style="left:463.3px;top:472.75px">0</div><div class="tc" style="left:573.3px;top:472.75px">1</div><div class="tc" style="left:683.3px;top:472.75px">0</div><div class="tc" style="left:793.3px;top:472.75px">0</div><div class="tc" style="left:1013.3px;top:472.75px">0</div><div class="tc" style="left:133.4px;top:504.00px">0</div><div class="tc" style="left:243.4px;top:504.00px">0</div><div class="tc" style="left:353.3px;top:504.00px">0</div><div class="tc" style="left:463.3px;top:504.00px">0</div><div class="tc" style="left:573.3px;top:504.00px">0</div><div class="tc" style="left:683.3px;top:504.00px">0</div><div class="tc" style="left:793.3px;top:504.00px">102776.39</div><div class="tc" style="left:903.3px;top:504.00px">9.4945</div><div class="tc" style="left:1013.3px;top:504.00px">72463.39</div></div><div class="abs" style="left:1908px;top:86.500px;width:3px;height:598px;background:#8d8d8d;border-radius:2px 0 0 2px"></div><div id="shadow"></div><div class="abs" style="left:195px;top:43.750px;width:10px;height:40px;background:linear-gradient(90deg,#c4c5c7,#cfcfd1 50%,#d6d6d8);z-index:6"></div>
</div>
</body></html>
